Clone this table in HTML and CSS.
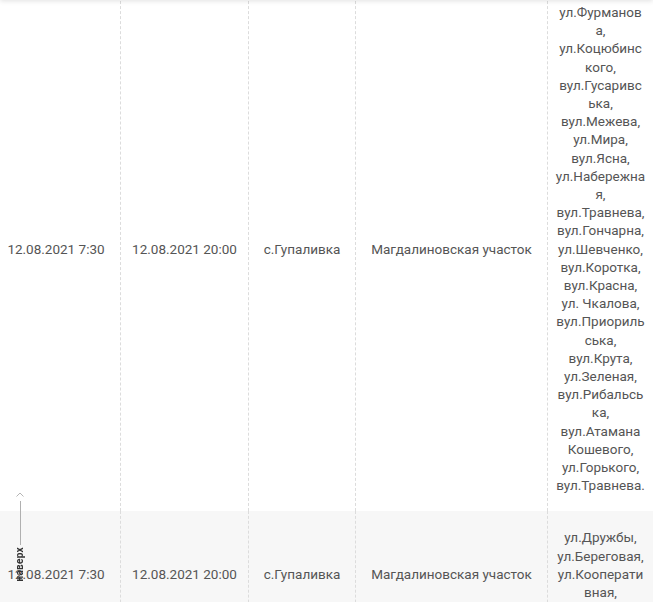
FILE: index.html
```html
<!DOCTYPE html>
<html lang="ru">
<head>
<meta charset="utf-8">
<title>Отключения</title>
<link rel="stylesheet" href="styles.css">
</head>
<body>
<div class="topbar"></div>
<div class="page">
  <table class="schedule">
    <colgroup>
      <col class="c-start">
      <col class="c-end">
      <col class="c-place">
      <col class="c-area">
      <col class="c-streets">
    </colgroup>
    <tbody>
      <tr>
        <td>12.08.2021 7:30</td>
        <td>12.08.2021 20:00</td>
        <td>с.Гупаливка</td>
        <td>Магдалиновская участок</td>
        <td class="streets">ул.Фурманова, ул.Коцюбинского, вул.Гусаривська, вул.Межева, ул.Мира, вул.Ясна, ул.Набережная, вул.Травнева, вул.Гончарна, ул.Шевченко, вул.Коротка, вул.Красна, ул. Чкалова, вул.Приорильська, вул.Крута, ул.Зеленая, вул.Рибальська, вул.Атамана Кошевого, ул.Горького, вул.Травнева.</td>
      </tr>
      <tr class="alt">
        <td>12.08.2021 7:30</td>
        <td>12.08.2021 20:00</td>
        <td>с.Гупаливка</td>
        <td>Магдалиновская участок</td>
        <td class="streets">ул.Дружбы, ул.Береговая, ул.Кооперативная, ул.Садовая.</td>
      </tr>
    </tbody>
  </table>
</div>
<a class="totop" href="#">
  <svg class="totop-caret" width="8" height="5" viewBox="0 0 8 5"><path d="M0.5 4.5 L4 1 L7.5 4.5" fill="none" stroke="#b5b5b5" stroke-width="1"/></svg>
  <span class="totop-line"></span>
  <span class="totop-text">наверх</span>
</a>
</body>
</html>
```
FILE: styles.css
```css
html, body {
  margin: 0;
  padding: 0;
  background: #fff;
  overflow: hidden;
}
body {
  font-family: Roboto, "Liberation Sans", Arial, sans-serif;
  font-size: 13.5px;
  line-height: 18.2px;
  color: #555;
}
.topbar {
  position: fixed;
  top: -20px;
  left: 0;
  right: 0;
  height: 20px;
  background: #fff;
  box-shadow: 0 1px 5px rgba(0, 0, 0, 0.12);
  z-index: 2;
}
.page {
  margin: -14px 0 0 -8px;
}
.schedule {
  width: 661px;
  table-layout: fixed;
  border-collapse: separate;
  border-spacing: 0;
}
.c-start { width: 128px; }
.c-end { width: 128px; }
.c-place { width: 107px; }
.c-area { width: 192px; }
.c-streets { width: 106px; }
.schedule td {
  padding: 17px 8px;
  text-align: center;
  vertical-align: middle;
  border-left: 1px dashed #dcdcdc;
}
.schedule td:first-child {
  border-left: none;
}
.schedule td.streets {
  padding-left: 7.75px;
  padding-right: 7.75px;
  overflow-wrap: anywhere;
  word-break: normal;
}
.schedule tr.alt td {
  background: #f7f7f7;
}
.totop {
  position: fixed;
  left: 12px;
  top: 492px;
  width: 16px;
  display: flex;
  flex-direction: column;
  align-items: center;
  text-decoration: none;
  z-index: 3;
}
.totop-caret {
  display: block;
}
.totop-line {
  display: block;
  width: 1px;
  height: 44px;
  margin-top: 4px;
  background: #b0b0b0;
}
.totop-text {
  margin-top: 2px;
  writing-mode: vertical-rl;
  transform: rotate(180deg);
  font-size: 10px;
  font-weight: 700;
  line-height: 12px;
  letter-spacing: 0.3px;
  color: #333;
}
```
